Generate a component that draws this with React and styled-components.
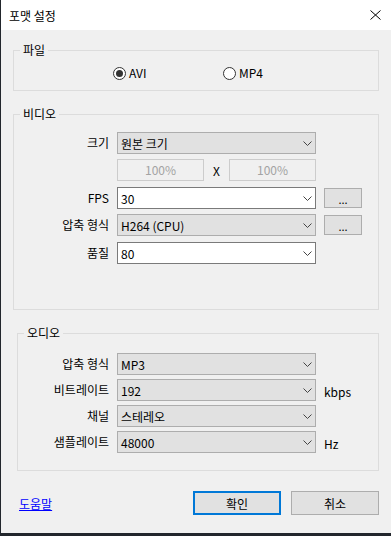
import React from 'react';
import styled, { createGlobalStyle } from 'styled-components';

const GlobalStyle = createGlobalStyle`
  html, body {
    margin: 0;
    padding: 0;
    background: #22262c;
  }
  body {
    font-family: "Noto Sans CJK KR", "Noto Sans", sans-serif;
    font-size: 12px;
    color: #000;
  }
  * { box-sizing: border-box; }
`;

// ---------- WINDOW
const Window = styled.div`
  margin-left: 1px;
  width: 390px;
  height: 533px;
  background: #f0f0f0;
  display: flex;
  flex-direction: column;
`;

const TitleBar = styled.header`
  height: 30px;
  flex-shrink: 0;
  background: #ffffff;
  display: flex;
  align-items: center;
  justify-content: space-between;
  padding: 0 10px 0 8px;
  font-size: 12px;
`;

const Content = styled.main`
  flex: 1;
  padding: 13px 12px 18px 12px;
  display: flex;
  flex-direction: column;
`;

// ---------- GROUP BOX
const Group = styled.fieldset`
  margin: ${p => p.$mt || 0}px 0 0 ${p => p.$ml || 0}px;
  padding: ${p => p.$pt}px 0 ${p => p.$pb}px 0;
  border: 1px solid #dcdcdc;
  min-width: 0;
`;

const Legend = styled.legend`
  margin-left: 6px;
  padding: 0 3px;
  line-height: 14px;
  font-size: 12px;
`;

// ---------- RADIO
const RadioRow = styled.div`
  display: flex;
  height: 16px;
  padding-left: 99px;
`;

const RadioLabel = styled.label`
  width: 110px;
  display: flex;
  align-items: center;
  gap: 3px;
  line-height: 16px;
`;

const RadioDot = styled.span`
  width: 13px;
  height: 13px;
  border-radius: 50%;
  border: 1px solid #333;
  background: #fff;
  display: flex;
  align-items: center;
  justify-content: center;

  &::after {
    content: '';
    display: ${p => (p.$checked ? 'block' : 'none')};
    width: 7px;
    height: 7px;
    border-radius: 50%;
    background: #333;
  }
`;

// ---------- FORM GRID
const Form = styled.div`
  display: grid;
  grid-template-columns: ${p => p.$label}px 199px auto;
  grid-template-rows: ${p => p.$rows};
  column-gap: 8px;
  row-gap: ${p => p.$gap}px;
`;

const Label = styled.span`
  grid-column: 1;
  height: 22px;
  line-height: 22px;
  text-align: right;
  white-space: nowrap;
`;

const Select = styled.div`
  grid-column: 2;
  height: 22px;
  display: flex;
  align-items: center;
  justify-content: space-between;
  padding: 0 3px;
  border: 1px solid ${p => (p.$white ? '#7a7a7a' : '#adadad')};
  background: ${p => (p.$white ? '#ffffff' : '#e1e1e1')};
`;

const SizeRow = styled.div`
  grid-column: 2;
  height: 22px;
  display: flex;
  align-items: center;
  justify-content: space-between;
`;

const Disabled = styled.div`
  width: 87px;
  height: 22px;
  border: 1px solid #cccccc;
  color: #a3a3a3;
  text-align: center;
  line-height: 20px;
`;

const Times = styled.span`
  width: 25px;
  text-align: center;
`;

const DotsButton = styled.div`
  grid-column: 3;
  width: 38px;
  height: 20px;
  margin-top: 1px;
  border: 1px solid #adadad;
  background: #e1e1e1;
  text-align: center;
  line-height: 20px;
  font-size: 11px;
`;

const Unit = styled.span`
  grid-column: 3;
  height: 22px;
  line-height: 26px;
`;

// ---------- FOOTER
const Footer = styled.footer`
  margin-top: 20px;
  display: flex;
  align-items: center;
  gap: 10px;
`;

const HelpLink = styled.a`
  margin-left: 6px;
  margin-right: auto;
  color: #0000ff;
  text-decoration: underline;
`;

const Button = styled.button`
  width: 88px;
  height: 24px;
  font: inherit;
  color: #000;
  background: #e1e1e1;
  border: ${p => (p.$primary ? '2px solid #0078d7' : '1px solid #adadad')};
  padding: 0;
`;

const Chevron = () => (
  <svg width="9" height="5" viewBox="0 0 9 5">
    <polyline points="0.5,0.5 4.5,4.5 8.5,0.5" fill="none" stroke="#444" strokeWidth="1" />
  </svg>
);

const Close = () => (
  <svg width="11" height="10" viewBox="0 0 11 10">
    <path d="M0.5 0.5 L10.5 9.5 M10.5 0.5 L0.5 9.5" stroke="#000" strokeWidth="1" />
  </svg>
);

const Dropdown = ({ value, white }) => (
  <Select $white={white}>
    <span>{value}</span>
    <Chevron />
  </Select>
);

export default function App() {
  return (
    <>
      <GlobalStyle />
      <Window>
        <TitleBar>
          <span>포맷 설정</span>
          <Close />
        </TitleBar>

        <Content>
          <Group $pt={8} $pb={9}>
            <Legend>파일</Legend>
            <RadioRow>
              <RadioLabel><RadioDot $checked />AVI</RadioLabel>
              <RadioLabel><RadioDot />MP4</RadioLabel>
            </RadioRow>
          </Group>

          <Group $mt={16} $pt={11} $pb={45}>
            <Legend>비디오</Legend>
            <Form $label={95} $rows="22px 23px 22px 23px 22px" $gap={5}>
              <Label>크기</Label>
              <Dropdown value="원본 크기" />
              <span />

              <span />
              <SizeRow>
                <Disabled>100%</Disabled>
                <Times>X</Times>
                <Disabled>100%</Disabled>
              </SizeRow>
              <span />

              <Label>FPS</Label>
              <Dropdown value="30" white />
              <DotsButton>...</DotsButton>

              <Label>압축 형식</Label>
              <Dropdown value="H264 (CPU)" />
              <DotsButton>...</DotsButton>

              <Label>품질</Label>
              <Dropdown value="80" white />
              <span />
            </Form>
          </Group>

          <Group $mt={16} $ml={4} $pt={13} $pb={17}>
            <Legend>오디오</Legend>
            <Form $label={91} $rows="repeat(4, 22px)" $gap={4}>
              <Label>압축 형식</Label>
              <Dropdown value="MP3" />
              <span />

              <Label>비트레이트</Label>
              <Dropdown value="192" />
              <Unit>kbps</Unit>

              <Label>채널</Label>
              <Dropdown value="스테레오" />
              <span />

              <Label>샘플레이트</Label>
              <Dropdown value="48000" />
              <Unit>Hz</Unit>
            </Form>
          </Group>

          <Footer>
            <HelpLink href="#">도움말</HelpLink>
            <Button $primary>확인</Button>
            <Button>취소</Button>
          </Footer>
        </Content>
      </Window>
    </>
  );
}
